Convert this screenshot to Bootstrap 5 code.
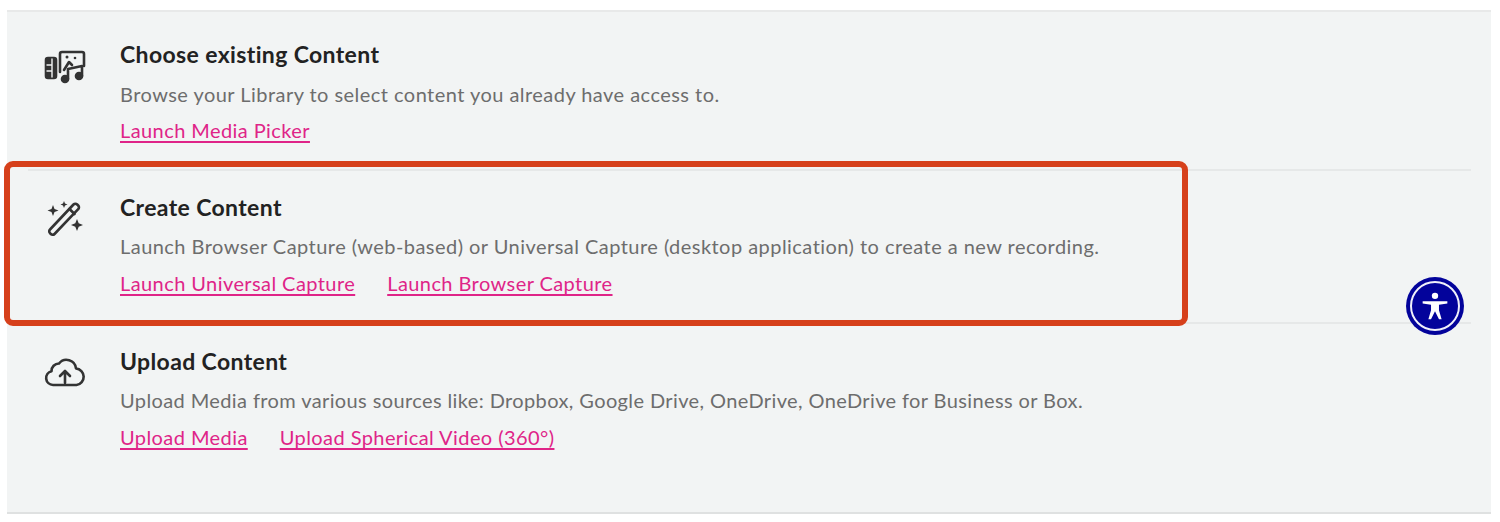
<!DOCTYPE html>
<html lang="en">
<head>
<meta charset="utf-8">
<title>Add Content</title>
<link href="https://cdn.jsdelivr.net/npm/bootstrap@5.3.0/dist/css/bootstrap.min.css" rel="stylesheet">
<style>
html, body { height: 522px; overflow: hidden; background: #fff; }
body { font-family: "Lato", "Liberation Sans", sans-serif; position: relative; }
.stage { padding: 10px 9px 8px 7px; height: 522px; }
.panel { background: #f2f4f4; border-top: 2px solid #e8e9e9; border-bottom: 2px solid #dfe1e1; height: 504px; padding: 0 20px 0 21px; }
.entry { height: 153px; padding-top: 21px; }
.entry-first { height: 157px; padding-top: 27px; }
.entry-last { padding-top: 22px; }
.entry + .entry { border-top: 2px solid #e6e8e8; }
.entry-icon { width: 92px; flex: none; padding-left: 16px; color: #333; }
.entry-icon svg { display: block; width: 42px; height: 42px; margin-top: 6px; }
.entry-first .entry-icon svg { margin-top: 4px; }
.entry-last .entry-icon svg { margin-top: 8px; }
.entry-title { font-size: 23px; line-height: 30px; font-weight: 700; color: #222; margin: 0 0 10px; letter-spacing: .37px; }
.entry-first .entry-title { margin-bottom: 11px; }
.entry-text { font-size: 20px; line-height: 28px; color: #6d6d6d; margin: 0 0 10px; letter-spacing: .46px; }
.entry-first .entry-text { margin-bottom: 9px; }
.entry-last .entry-text { letter-spacing: .39px; }
.link-row { gap: 32px; }
.entry-link { font-size: 20px; line-height: 27px; color: #df2488; text-decoration: underline; text-decoration-thickness: 2px; text-underline-offset: 3px; text-decoration-skip-ink: auto; letter-spacing: .42px; }
.entry-link:hover { color: #df2488; }
.highlight { position: absolute; left: 4px; top: 161px; width: 1184px; height: 165px; border: 6px solid #d6401b; border-radius: 9px; pointer-events: none; }
.a11y-btn { position: absolute; left: 1406px; top: 277px; width: 58px; height: 58px; border-radius: 50%; background: #03039b; color: #fff; padding: 4px; }
.a11y-ring { width: 100%; height: 100%; border: 2px solid #f0f0fa; border-radius: 50%; }
.a11y-ring svg { width: 30px; height: 30px; }
</style>
</head>
<body>
<div class="stage">
  <div class="panel">
    <div class="entry entry-first d-flex">
      <div class="entry-icon">
        <svg viewBox="0 0 42 42" fill="none" stroke="currentColor" stroke-width="2.600" stroke-linecap="round" stroke-linejoin="round">
          <rect x="2" y="15" width="10" height="20" rx="2" fill="currentColor"/>
          <path stroke="#f2f4f4" stroke-width="1.400" d="M8 16v18M3 22h4M3 28h4"/>
          <path d="M16 29V11a2 2 0 0 1 2-2h20a2 2 0 0 1 2 2v12"/>
          <path d="M20 27l5-8 3 3"/>
          <circle cx="23" cy="14" r="1.500" fill="currentColor" stroke="none"/>
          <circle cx="31" cy="15" r="1.300" fill="currentColor" stroke="none"/>
          <path d="M24 36V26l14-3v10"/>
          <circle cx="21" cy="36" r="3" fill="currentColor"/>
          <circle cx="35" cy="33" r="3" fill="currentColor"/>
        </svg>
      </div>
      <div>
        <h2 class="entry-title">Choose existing Content</h2>
        <p class="entry-text">Browse your Library to select content you already have access to.</p>
        <div class="d-flex link-row"><a class="entry-link" href="#">Launch Media Picker</a></div>
      </div>
    </div>
    <div class="entry d-flex">
      <div class="entry-icon">
        <svg viewBox="0 0 42 42" fill="none" stroke="currentColor" stroke-width="2.600" stroke-linejoin="round" stroke-linecap="round">
          <path d="M6 31.500 29.500 6.500a2.600 2.600 0 0 1 3.700 0l1 1a2.600 2.600 0 0 1 0 3.700L10.500 36a2.600 2.600 0 0 1-3.700 0l-.8-.8a2.600 2.600 0 0 1 0-3.700z"/>
          <path d="M25.500 11l5 5"/>
          <path fill="currentColor" stroke="none" d="M9 7l1.500 4 4 1.500-4 1.500-1.500 4-1.500-4-4-1.500 4-1.500zM20 3l1 2.500 2.500 1-2.500 1-1 2.500-1-2.500-2.500-1 2.500-1zM33 21l1.700 4.300 4.300 1.700-4.300 1.700-1.700 4.300-1.700-4.300-4.300-1.700 4.300-1.700z"/>
        </svg>
      </div>
      <div>
        <h2 class="entry-title">Create Content</h2>
        <p class="entry-text">Launch Browser Capture (web-based) or Universal Capture (desktop application) to create a new recording.</p>
        <div class="d-flex link-row"><a class="entry-link" href="#">Launch Universal Capture</a><a class="entry-link" href="#">Launch Browser Capture</a></div>
      </div>
    </div>
    <div class="entry entry-last d-flex">
      <div class="entry-icon">
        <svg viewBox="0 0 42 42" fill="none" stroke="currentColor" stroke-width="2.600" stroke-linecap="round" stroke-linejoin="round">
          <path d="M11 31H9a7 7 0 0 1-1.500-13.800A7.500 7.500 0 0 1 15 9.500 9.500 9.500 0 0 1 32 14.500 8.300 8.300 0 0 1 32.500 31H11z"/>
          <path d="M21 29V17M16 22l5-5 5 5"/>
        </svg>
      </div>
      <div>
        <h2 class="entry-title">Upload Content</h2>
        <p class="entry-text">Upload Media from various sources like: Dropbox, Google Drive, OneDrive, OneDrive for Business or Box.</p>
        <div class="d-flex link-row"><a class="entry-link" href="#">Upload Media</a><a class="entry-link" href="#">Upload Spherical Video (360°)</a></div>
      </div>
    </div>
  </div>
</div>
<div class="highlight"></div>
<div class="a11y-btn">
  <div class="a11y-ring d-flex align-items-center justify-content-center">
    <svg viewBox="0 0 34 34" fill="#fff">
      <circle cx="17" cy="5.500" r="3.600"/>
      <path d="M3 11.500h28v2.800l-9.500 1.400v6l3 10.300h-3L17 23l-4.500 9h-3l3-10.300v-6L3 14.300z"/>
    </svg>
  </div>
</div>
<script src="https://cdn.jsdelivr.net/npm/bootstrap@5.3.0/dist/js/bootstrap.bundle.min.js"></script>
</body>
</html>
